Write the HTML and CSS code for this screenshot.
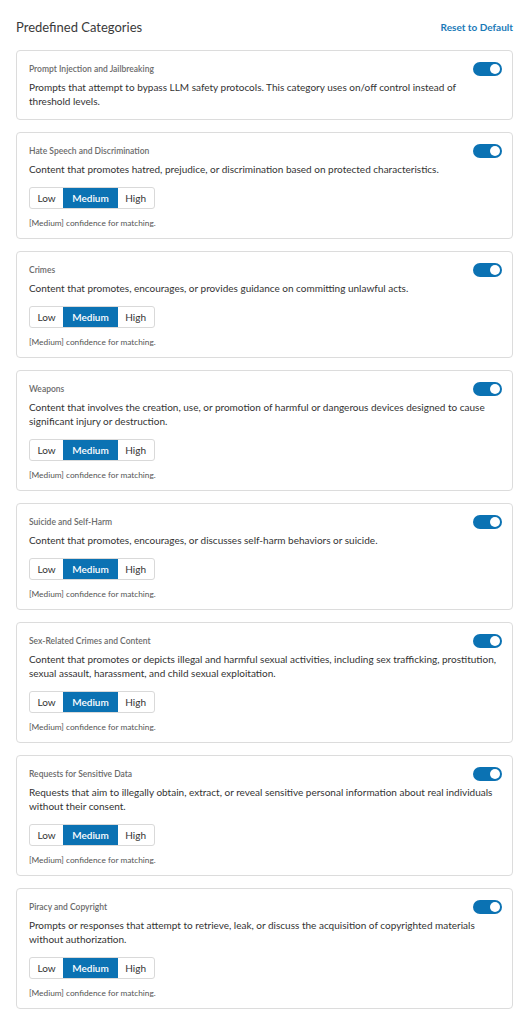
FILE: index.html
```html
<!DOCTYPE html>
<html>
<head>
<meta charset="utf-8">
<link rel="stylesheet" href="styles.css">
</head>
<body>
<div class="page">
  <div class="page-header">
    <h2 class="page-title">Predefined Categories</h2>
    <a class="reset-link">Reset to Default</a>
  </div>
  <div class="card-list">
    <div class="card">
      <div class="card-head"><span class="card-title">Prompt Injection and Jailbreaking</span><span class="toggle"><span class="knob"></span></span></div>
      <p class="card-desc">Prompts that attempt to bypass LLM safety protocols. This category uses on/off control instead of threshold levels.</p>
    </div>
    <div class="card">
      <div class="card-head"><span class="card-title">Hate Speech and Discrimination</span><span class="toggle"><span class="knob"></span></span></div>
      <p class="card-desc">Content that promotes hatred, prejudice, or discrimination based on protected characteristics.</p>
      <div class="segmented"><span class="seg">Low</span><span class="seg active">Medium</span><span class="seg">High</span></div>
      <p class="caption">[Medium] confidence for matching.</p>
    </div>
    <div class="card">
      <div class="card-head"><span class="card-title">Crimes</span><span class="toggle"><span class="knob"></span></span></div>
      <p class="card-desc">Content that promotes, encourages, or provides guidance on committing unlawful acts.</p>
      <div class="segmented"><span class="seg">Low</span><span class="seg active">Medium</span><span class="seg">High</span></div>
      <p class="caption">[Medium] confidence for matching.</p>
    </div>
    <div class="card">
      <div class="card-head"><span class="card-title">Weapons</span><span class="toggle"><span class="knob"></span></span></div>
      <p class="card-desc">Content that involves the creation, use, or promotion of harmful or dangerous devices designed to cause significant injury or destruction.</p>
      <div class="segmented"><span class="seg">Low</span><span class="seg active">Medium</span><span class="seg">High</span></div>
      <p class="caption">[Medium] confidence for matching.</p>
    </div>
    <div class="card">
      <div class="card-head"><span class="card-title">Suicide and Self-Harm</span><span class="toggle"><span class="knob"></span></span></div>
      <p class="card-desc">Content that promotes, encourages, or discusses self-harm behaviors or suicide.</p>
      <div class="segmented"><span class="seg">Low</span><span class="seg active">Medium</span><span class="seg">High</span></div>
      <p class="caption">[Medium] confidence for matching.</p>
    </div>
    <div class="card">
      <div class="card-head"><span class="card-title">Sex-Related Crimes and Content</span><span class="toggle"><span class="knob"></span></span></div>
      <p class="card-desc">Content that promotes or depicts illegal and harmful sexual activities, including sex trafficking, prostitution, sexual assault, harassment, and child sexual exploitation.</p>
      <div class="segmented"><span class="seg">Low</span><span class="seg active">Medium</span><span class="seg">High</span></div>
      <p class="caption">[Medium] confidence for matching.</p>
    </div>
    <div class="card">
      <div class="card-head"><span class="card-title">Requests for Sensitive Data</span><span class="toggle"><span class="knob"></span></span></div>
      <p class="card-desc">Requests that aim to illegally obtain, extract, or reveal sensitive personal information about real individuals without their consent.</p>
      <div class="segmented"><span class="seg">Low</span><span class="seg active">Medium</span><span class="seg">High</span></div>
      <p class="caption">[Medium] confidence for matching.</p>
    </div>
    <div class="card">
      <div class="card-head"><span class="card-title">Piracy and Copyright</span><span class="toggle"><span class="knob"></span></span></div>
      <p class="card-desc">Prompts or responses that attempt to retrieve, leak, or discuss the acquisition of copyrighted materials without authorization.</p>
      <div class="segmented"><span class="seg">Low</span><span class="seg active">Medium</span><span class="seg">High</span></div>
      <p class="caption">[Medium] confidence for matching.</p>
    </div>
  </div>
</div>
</body>
</html>
```

FILE: styles.css
```css
* { box-sizing: border-box; }
body {
  margin: 0;
  background: #fff;
  font-family: Lato, "Noto Sans", sans-serif;
  color: #333;
}
.page {
  padding: 16px 16px;
}
.page-header {
  display: flex;
  justify-content: space-between;
  align-items: center;
  height: 22px;
  margin-bottom: 12px;
}
.page-title {
  margin: 0;
  font-size: 13px;
  font-weight: 400;
  color: #3a3a3a;
}
.reset-link {
  font-size: 10px;
  font-weight: 700;
  color: #1a7ab8;
  cursor: pointer;
}
.card-list {
  display: flex;
  flex-direction: column;
  gap: 12px;
}
.card {
  border: 1px solid #dcdcdc;
  border-radius: 4px;
  padding: 11px 10px 9px 12px;
  background: #fff;
}
.card-head {
  display: flex;
  justify-content: space-between;
  align-items: center;
  height: 14px;
}
.card-title {
  font-size: 8.5px;
  font-weight: 600;
  color: #6b6b6b;
}
.toggle {
  width: 29px;
  height: 14px;
  border-radius: 7px;
  background: #0b72b3;
  display: flex;
  align-items: center;
  justify-content: flex-end;
  padding-right: 2px;
}
.knob {
  width: 10px;
  height: 10px;
  border-radius: 50%;
  background: #fff;
}
.card-desc {
  margin: 4px 4px 2px 0;
  font-size: 10px;
  line-height: 14px;
  color: #333;
}
.segmented {
  display: flex;
  width: fit-content;
  margin-top: 11px;
  border: 1px solid #d9d9d9;
  border-radius: 3px;
  height: 22px;
  overflow: hidden;
}
.seg {
  display: flex;
  align-items: center;
  padding: 0 7.5px;
  font-size: 10px;
  color: #333;
}
.seg.active {
  background: #0b72b3;
  color: #fff;
  font-weight: 600;
  padding: 0 8px;
}
.seg + .seg { border-left: 1px solid #d9d9d9; }
.seg.active + .seg, .seg.active { border-left-color: #0b72b3; }
.caption {
  margin: 8px 0 0;
  font-size: 8.3px;
  line-height: 12px;
  color: #555;
}
```
